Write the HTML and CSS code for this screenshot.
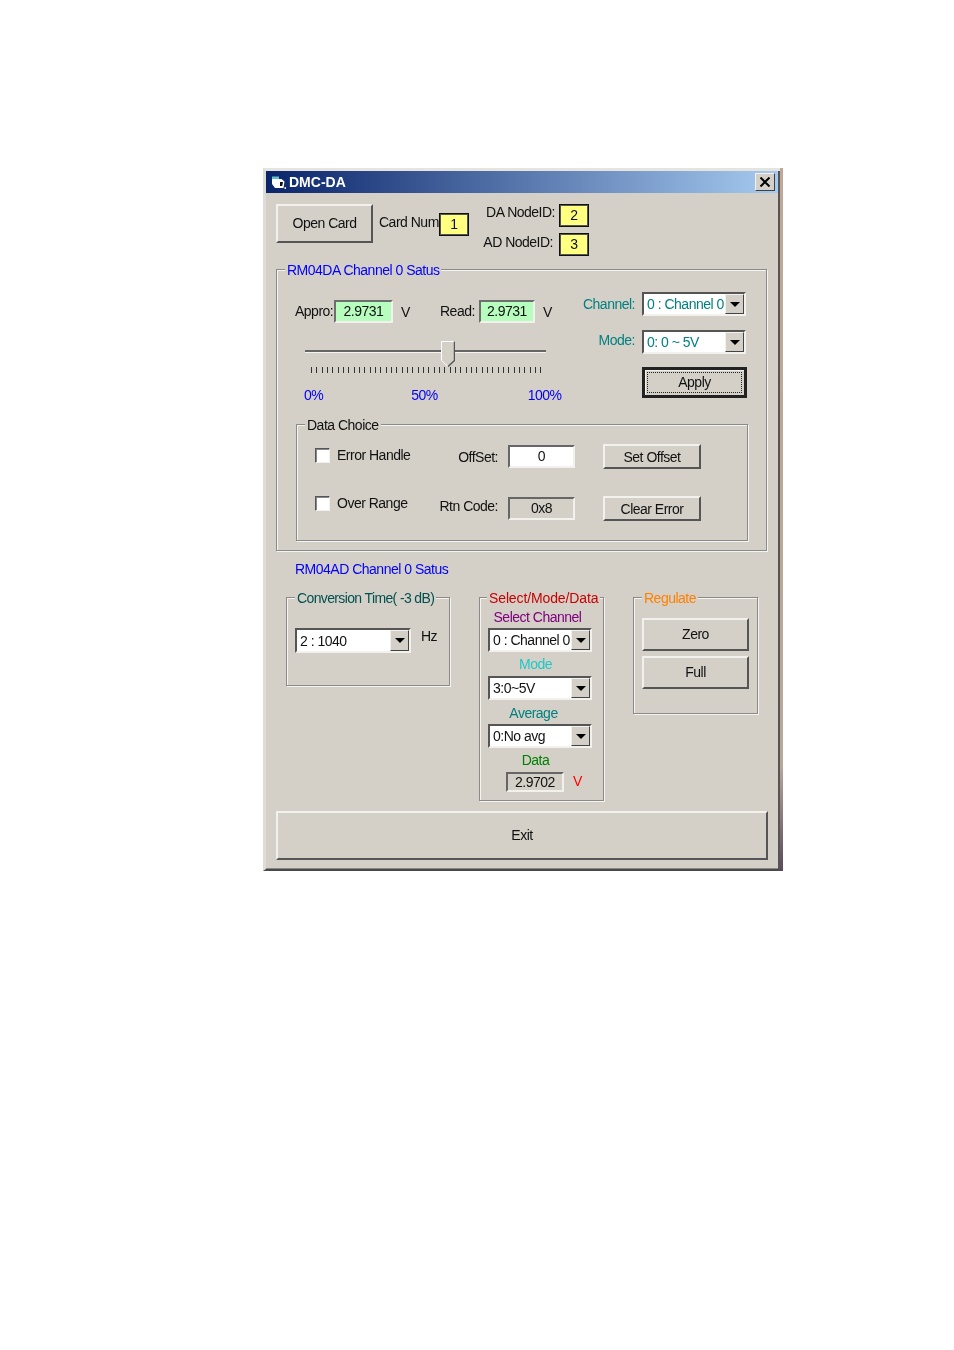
FILE: index.html
```html
<!DOCTYPE html>
<html lang="en">
<head>
<meta charset="utf-8">
<title>DMC-DA</title>
<link rel="stylesheet" href="styles.css">
</head>
<body>
<div class="window">
  <div class="titlebar">
    <svg class="appicon" width="14" height="13" viewBox="0 0 14 13"><path d="M0 .5h7v2.500H0z" fill="#5fc4c8"/><path d="M0 3h9.500l3 2.500-1 6.500H3L0 8z" fill="#fff"/><path d="M8 6h3l-.8 4H8z" fill="#111"/><path d="M12.500 11H14v2h-1.500z" fill="#e6e6e6"/></svg>
    <span class="title-text">DMC-DA</span>
    <span class="closebtn"><svg width="12" height="10" viewBox="0 0 12 10"><path d="M1.500 .5l9 9M10.500 .5l-9 9" fill="none" stroke="#000" stroke-width="2"/></svg></span>
  </div>
  <div class="client">
    <div class="toprow">
      <div class="btn btn-open"><span class="raise">Open Card</span></div>
      <span class="lbl lbl-cardnum">Card Num:</span>
      <div class="field yellow f-card">1</div>
      <div class="nodes">
        <div class="noderow"><span class="lbl">DA NodeID:</span><div class="field yellow f-node">2</div></div>
        <div class="noderow noderow-ad"><span class="lbl">AD NodeID:</span><div class="field yellow f-node">3</div></div>
      </div>
    </div>

    <div class="group g-da">
      <span class="legend leg-da">RM04DA Channel 0 Satus</span>
      <div class="da-top">
        <div class="da-left">
          <div class="readrow">
            <span class="lbl l-appro">Appro:</span>
            <div class="field green f-appro">2.9731</div>
            <span class="lbl unit">V</span>
            <span class="lbl l-read">Read:</span>
            <div class="field green f-read">2.9731</div>
            <span class="lbl unit">V</span>
          </div>
          <div class="slider">
            <div class="track"></div>
            <svg class="thumb" width="14" height="26" viewBox="0 0 14 26"><path d="M.5.5h13v19l-6.500 6-6.500-6z" fill="#d4d0c8" stroke="#fff"/><path d="M13.500.5v19l-6.500 6" fill="none" stroke="#555" stroke-width="1.500"/></svg>
            <div class="ticks"></div>
          </div>
          <div class="pcts"><span class="pct p0">0%</span><span class="pct p50">50%</span><span class="pct p100">100%</span></div>
        </div>
        <div class="da-right">
          <div class="comborow">
            <span class="lbl teal l-combo">Channel:</span>
            <div class="combo c-da teal"><span class="combo-text">0 : Channel 0</span><span class="arrow"></span></div>
          </div>
          <div class="comborow second">
            <span class="lbl teal l-combo">Mode:</span>
            <div class="combo c-da teal"><span class="combo-text">0: 0 ~ 5V</span><span class="arrow"></span></div>
          </div>
          <div class="btn btn-apply"><span class="focus">Apply</span></div>
        </div>
      </div>
      <div class="group g-choice">
        <span class="legend leg-choice">Data Choice</span>
        <div class="choicerow r1">
          <div class="checkwrap cw1"><span class="check"></span><span class="lbl l-check">Error Handle</span></div>
          <span class="lbl l-field">OffSet:</span>
          <div class="field white f-offset">0</div>
          <div class="btn btn-small">Set Offset</div>
        </div>
        <div class="choicerow r2">
          <div class="checkwrap cw2"><span class="check"></span><span class="lbl l-check">Over Range</span></div>
          <span class="lbl l-field l-rtn">Rtn Code:</span>
          <div class="field grey f-offset">0x8</div>
          <div class="btn btn-small">Clear Error</div>
        </div>
      </div>
    </div>

    <div class="ad-title">RM04AD Channel 0 Satus</div>

    <div class="lower">
      <div class="group g-conv">
        <span class="legend leg-conv">Conversion Time( -3 dB)</span>
        <div class="conv-row">
          <div class="combo c-conv"><span class="combo-text">2 : 1040</span><span class="arrow"></span></div>
          <span class="lbl hz">Hz</span>
        </div>
      </div>
      <div class="group g-select">
        <span class="legend leg-select">Select/Mode/Data</span>
        <div class="cap cap-purple">Select Channel</div>
        <div class="combo c-sel"><span class="combo-text">0 : Channel 0</span><span class="arrow"></span></div>
        <div class="cap cap-cyan">Mode</div>
        <div class="combo c-sel"><span class="combo-text">3:0~5V</span><span class="arrow"></span></div>
        <div class="cap cap-teal">Average</div>
        <div class="combo c-sel"><span class="combo-text">0:No avg</span><span class="arrow"></span></div>
        <div class="cap cap-green">Data</div>
        <div class="datarow">
          <div class="field grey f-data">2.9702</div>
          <span class="lbl unit-red">V</span>
        </div>
      </div>
      <div class="group g-reg">
        <span class="legend leg-reg">Regulate</span>
        <div class="btn btn-reg">Zero</div>
        <div class="btn btn-reg">Full</div>
      </div>
    </div>

    <div class="btn btn-exit">Exit</div>
  </div>
</div>
</body>
</html>
```
FILE: styles.css
```css
* { box-sizing: border-box; }
html, body { margin: 0; background: #fff; }
body {
  width: 954px;
  height: 1350px;
  padding: 168px 0 0 263px;
  font: 14px/16px "Liberation Sans", Arial, sans-serif;
  letter-spacing: -0.5px;
  color: #111;
  overflow: hidden;
}
.window {
  position: relative;
  width: 520px;
  height: 703px;
  background: #d4d0c8;
  border-style: solid;
  border-width: 3px 3px 2px 3px;
  border-color: #e6e4df transparent #4a4a4a #dedcd6;
  box-shadow: inset -2px 0 0 #555, inset 0 -1px 0 #888;
  filter: blur(0.35px);
}
.window::after {
  content: "";
  position: absolute;
  top: -3px;
  right: -3px;
  bottom: -2px;
  width: 3px;
  background: linear-gradient(180deg, #c0a896, #b9a79a 85%, #5a4a5a);
}
.titlebar {
  height: 22px;
  margin-right: 2px;
  display: flex;
  align-items: center;
  padding-left: 6px;
  background: linear-gradient(90deg, #0a246a, #a6caf0);
}
.appicon { margin-right: 3px; }
.title-text { color: #fff; font-weight: 700; font-size: 14px; letter-spacing: 0; }
.closebtn {
  margin-left: auto;
  margin-right: 3px;
  width: 20px;
  height: 18px;
  display: flex;
  align-items: center;
  justify-content: center;
  background: #d4d0c8;
  border: 1px solid;
  border-color: #f2f1ee #404040 #404040 #f2f1ee;
}
.client { padding: 11px 0 0 10px; }

.lbl { white-space: nowrap; }
.teal { color: #008080; }

/* generic controls */
.btn {
  display: flex;
  align-items: center;
  justify-content: center;
  background: #d4d0c8;
  border: 2px solid;
  border-color: #f2f1ee #555 #555 #f2f1ee;
  padding-bottom: 2px;
}
.raise { margin-top: 1px; }
.field {
  display: flex;
  align-items: center;
  justify-content: center;
  border: 2px solid;
  padding-bottom: 2px;
}
.yellow { background: #ffff80; border: 1px solid #111; box-shadow: inset 0 0 0 1px #555; }
.green { background: #b6fdbe; border-color: #6e6e6e #f2f1ee #f2f1ee #6e6e6e; }
.white { background: #fff; border-color: #666 #f2f1ee #f2f1ee #666; }
.grey { background: #d4d0c8; border-color: #666 #f2f1ee #f2f1ee #666; }

.combo {
  position: relative;
  display: flex;
  align-items: center;
  background: #fff;
  border: 2px solid;
  border-color: #555 #f2f1ee #f2f1ee #555;
  height: 24px;
}
.combo-text { padding-left: 3px; white-space: nowrap; flex: 1; overflow: hidden; }
.arrow {
  width: 19px;
  height: 100%;
  flex: none;
  display: flex;
  align-items: center;
  justify-content: center;
  background: #d4d0c8;
  border: 1px solid;
  border-color: #f2f1ee #444 #444 #f2f1ee;
}
.arrow::after {
  content: "";
  border: 5px solid transparent;
  border-top: 5px solid #000;
  border-bottom: 0;
}

.group {
  position: relative;
  border: 1px solid #8a8a8a;
  box-shadow: 1px 1px 0 #f5f4f1, inset 1px 1px 0 #f5f4f1;
}
.legend {
  position: absolute;
  top: -8px;
  background: #d4d0c8;
  padding: 0 2px;
  white-space: nowrap;
}

/* top row */
.toprow { display: flex; height: 52px; }
.btn-open { width: 97px; height: 39px; }
.lbl-cardnum { margin: 10px 0 0 6px; width: 60px; }
.f-card { width: 30px; height: 23px; margin-top: 9px; }
.nodes { margin-left: 16px; display: flex; flex-direction: column; gap: 6px; width: 104px; }
.noderow { display: flex; justify-content: flex-end; align-items: flex-start; gap: 4px; }
.noderow-ad { gap: 6px; }
.noderow-ad .lbl { margin-top: 1px; }
.f-node { width: 30px; height: 23px; flex: none; }

/* D/A group */
.g-da { width: 491px; height: 282px; margin-top: 13px; }
.leg-da { left: 8px; color: #0000ff; }
.da-top { display: flex; height: 154px; }
.da-left { width: 298px; padding: 30px 0 0 18px; flex: none; }
.readrow { display: flex; align-items: center; height: 23px; }
.readrow > .lbl { margin-bottom: 2px; }
.readrow > .unit { margin-bottom: 0; }
.l-appro { width: 39px; }
.f-appro { width: 59px; height: 23px; }
.unit { margin-left: 8px; width: 10px; }
.l-read { margin-left: 29px; width: 39px; }
.f-read { width: 56px; height: 23px; }
.slider { position: relative; width: 241px; height: 34px; margin: 18px 0 0 10px; }
.track {
  position: absolute;
  left: 0; right: 0; top: 9px;
  height: 3px;
  background: #f5f4f1;
  border-top: 2px solid #666;
}
.thumb { position: absolute; left: 136px; top: 0; }
.ticks {
  position: absolute;
  left: 6px; top: 26px;
  width: 231px;
  height: 6px;
  background: repeating-linear-gradient(90deg, #333 0 1px, transparent 1px 5.33px);
}
.pcts { display: flex; margin-top: 12px; color: #0000ff; margin-left: 9px; }
.pct { white-space: nowrap; }
.p50 { margin-left: 88px; }
.p100 { margin-left: 90px; }
.da-right { padding-top: 22px; }
.comborow { display: flex; align-items: center; }
.second { margin-top: 14px; }
.second .l-combo { margin-bottom: 4px; }
.l-combo { width: 60px; text-align: right; margin-right: 7px; }
.c-da { width: 104px; }
.btn-apply {
  width: 105px;
  height: 31px;
  margin: 13px 0 0 67px;
  border: 3px solid #222;
  box-shadow: inset 1px 1px 0 #f2f1ee;
  padding: 2px;
}
.focus {
  width: 100%;
  height: 100%;
  display: flex;
  align-items: center;
  justify-content: center;
  border: 1px dotted #222;
  padding-bottom: 2px;
}

/* Data choice */
.g-choice { width: 452px; height: 117px; margin-left: 19px; }
.leg-choice { left: 8px; }
.choicerow { display: flex; align-items: center; height: 25px; padding-left: 18px; }
.r1 { margin-top: 19px; }
.r2 { margin-top: 27px; }
.checkwrap { display: flex; align-items: center; flex: none; }
.cw1 { margin-bottom: 3px; }
.cw2 { margin-bottom: 11px; }
.check {
  width: 15px;
  height: 15px;
  flex: none;
  background: #fff;
  border: 1px solid;
  border-color: #555 #f2f1ee #f2f1ee #555;
  box-shadow: inset 1px 1px 0 #888;
}
.l-check { width: 94px; margin-left: 7px; }
.l-field { width: 67px; text-align: right; }
.l-rtn { margin-bottom: 6px; }
.f-offset { width: 67px; height: 23px; margin-left: 10px; padding-bottom: 1px; }
.btn-small { width: 98px; height: 25px; margin-left: 28px; padding-bottom: 0; }

.ad-title { margin: 10px 0 0 19px; color: #0000ff; height: 16px; }

/* lower groups */
.lower { display: flex; align-items: flex-start; gap: 29px; height: 204px; margin: 20px 0 0 10px; }
.g-conv { width: 164px; height: 89px; }
.leg-conv { left: 8px; color: #005050; letter-spacing: -0.63px; }
.conv-row { display: flex; padding: 30px 0 0 8px; }
.c-conv { width: 116px; height: 25px; }
.hz { margin: 0 0 0 10px; }
.g-select { width: 125px; height: 204px; }
.leg-select { left: 7px; color: #c80000; letter-spacing: -0.12px; }
.cap { text-align: center; height: 24px; padding-top: 4px; }
.cap-purple { color: #800080; margin-top: 7px; padding-right: 8px; padding-top: 4px; height: 23px; }
.cap-cyan { color: #20c8c8; padding-right: 12px; }
.cap-teal { color: #008080; padding-right: 16px; padding-top: 5px; }
.cap-green { color: #008000; padding-right: 12px; }
.c-sel { width: 104px; margin-left: 8px; }
.datarow { display: flex; align-items: center; padding-left: 26px; }
.f-data { width: 58px; height: 20px; padding-bottom: 0; }
.unit-red { color: #ff0000; margin-left: 9px; margin-bottom: 2px; }
.g-reg { width: 125px; height: 117px; padding: 20px 0 0 8px; }
.leg-reg { left: 8px; color: #ff8000; }
.btn-reg { width: 107px; height: 33px; margin-bottom: 5px; }
.btn-exit { width: 492px; height: 49px; margin-top: 10px; padding-bottom: 1px; }
```
